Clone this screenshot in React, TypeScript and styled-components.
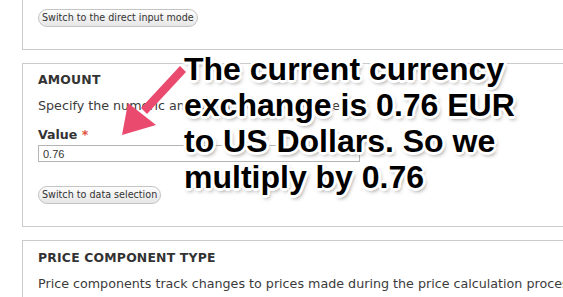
import styled, {createGlobalStyle} from 'styled-components';

const GlobalStyle = createGlobalStyle`
  html, body {
    margin: 0;
    padding: 0;
    background: #fff;
  }
  body {
    font-family: "DejaVu Sans", "Liberation Sans", sans-serif;
    color: #333;
  }
`;

const Page = styled.div`
  position: relative;
  width: 563px;
  height: 297px;
  overflow: hidden;
  padding-left: 22px;
  box-sizing: border-box;
`;

const Fieldset = styled.div<{$top?: number}>`
  width: 700px;
  border: 1px solid #cbcbcb;
  border-right: none;
  margin-top: ${p => p.$top ?? 0}px;
  margin-bottom: 13px;
  padding: 0 15px;
  box-sizing: border-box;
`;

const TopSet = styled(Fieldset)`
  padding-top: 38px;
  padding-bottom: 22px;
`;

const AmountSet = styled(Fieldset)`
  padding-top: 8px;
  padding-bottom: 22px;
`;

const TypeSet = styled(Fieldset)`
  padding-top: 9px;
  padding-bottom: 20px;
`;

const Legend = styled.div`
  font-size: 12.4px;
  font-weight: bold;
  line-height: 16px;
  color: #333;
  letter-spacing: 0.2px;
`;

const Description = styled.div`
  font-size: 12.7px;
  line-height: 16px;
  margin-top: 10px;
  color: #3b3b3b;
  white-space: nowrap;
`;

const Label = styled.div`
  font-size: 12.6px;
  font-weight: bold;
  line-height: 16px;
  margin-top: 13px;
  color: #333;
`;

const Required = styled.span`
  color: #e0523b;
`;

const Input = styled.input`
  display: block;
  width: 322px;
  height: 17px;
  margin-top: 2px;
  border: 1px solid #b4b4b4;
  padding: 0 4px;
  box-sizing: border-box;
  font-family: "Liberation Sans", sans-serif;
  font-size: 11px;
  color: #333;
  background: #fff;
`;

const PillButton = styled.button<{$gap?: number}>`
  display: block;
  height: 18px;
  margin-top: ${p => p.$gap ?? 0}px;
  padding: 0 3px;
  border: 1px solid #c4c4c4;
  border-radius: 9px;
  background: linear-gradient(#fdfdfd, #e6e6e6);
  font-family: "DejaVu Sans", sans-serif;
  font-size: 9.6px;
  line-height: 16px;
  color: #333;
  white-space: nowrap;
`;

const Callout = styled.div`
  position: absolute;
  left: 184px;
  top: 51px;
  font-family: "Liberation Sans", Arial, sans-serif;
  font-weight: bold;
  font-size: 32px;
  line-height: 36px;
  color: #000;
  white-space: nowrap;
  text-shadow:
    -2px -2px 0 #fff, 2px -2px 0 #fff, -2px 2px 0 #fff, 2px 2px 0 #fff,
    0 -3px 0 #fff, 0 3px 0 #fff, -3px 0 0 #fff, 3px 0 0 #fff,
    2px 3px 4px rgba(0, 0, 0, 0.5);
`;

const ArrowSvg = styled.svg`
  position: absolute;
  left: 110px;
  top: 55px;
  overflow: visible;
`;

function Arrow() {
  return (
    <ArrowSvg width="90" height="90" viewBox="0 0 90 90">
      <g fill="#ea4a6e">
        <path d="M70 11 L76 17 L37 59 L31 53 Z" />
        <path d="M12 80 L18 48 L46 70 Z" />
      </g>
    </ArrowSvg>
  );
}

export default function App() {
  return (
    <Page>
      <GlobalStyle />
      <TopSet $top={-30}>
        <PillButton>Switch to the direct input mode</PillButton>
      </TopSet>
      <AmountSet>
        <Legend>AMOUNT</Legend>
        <Description>Specify the numeric amount to add to the price.</Description>
        <Label>
          Value <Required>*</Required>
        </Label>
        <Input defaultValue="0.76" />
        <PillButton $gap={24}>Switch to data selection</PillButton>
      </AmountSet>
      <TypeSet>
        <Legend>PRICE COMPONENT TYPE</Legend>
        <Description>
          Price components track changes to prices made during the price calculation process.
        </Description>
      </TypeSet>
      <Arrow />
      <Callout>
        The current currency
        <br />
        exchange is 0.76 EUR
        <br />
        to US Dollars. So we
        <br />
        multiply by 0.76
      </Callout>
    </Page>
  );
}
